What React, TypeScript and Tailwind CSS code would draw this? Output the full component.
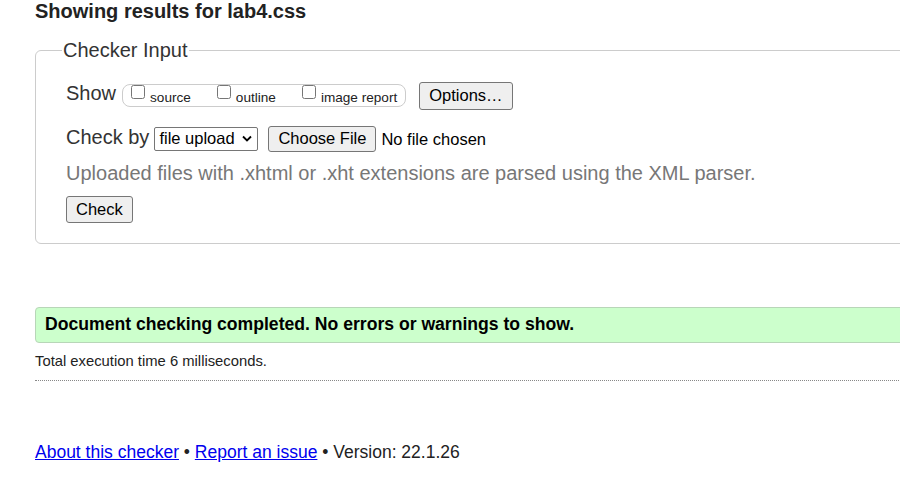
import React from 'react';

const Checkbox = ({ label }: { label: string }) => (
  <label className="flex items-start">
    <input type="checkbox" className="w-[14px] h-[14px] m-0" />
    <span className="ml-[5px] mt-[5px] text-[13.6px] leading-[15px] text-[#222]">{label}</span>
  </label>
);

const GrayButton = ({ children, className = '' }: { children: React.ReactNode; className?: string }) => (
  <button
    className={`bg-[#efefef] border border-[#767676] rounded-[3px] text-[16.5px] text-black leading-none flex items-center ${className}`}
  >
    {children}
  </button>
);

export default function App() {
  return (
    <div className="w-[900px] h-[502px] overflow-hidden bg-white pl-[35px] font-['Liberation_Sans',Arial,sans-serif] text-[#222]">
      <h2 className="text-[20px] font-bold leading-[23px] text-[#222]">Showing results for lab4.css</h2>

      {/* Checker Input */}
      <fieldset className="mt-[15.5px] w-[900px] border border-[#cccccc] rounded-[6px] pl-[30px] pt-[20px] pb-[20px]">
        <legend className="-ml-[4px] px-[1px] text-[20px] leading-[23px] text-[#333]">Checker Input</legend>

        <div className="flex items-start h-[28px]">
          <span className="text-[20px] leading-[23px] text-[#333]">Show</span>
          <div className="ml-[6px] mt-[2px] h-[23px] flex items-start gap-[26px] border border-[#cccccc] rounded-[8px] pl-[8px] pr-[8px]">
            <Checkbox label="source" />
            <Checkbox label="outline" />
            <Checkbox label="image report" />
          </div>
          <GrayButton className="ml-[13px] h-[28px] px-[9px]">Options…</GrayButton>
        </div>

        <div className="flex items-start mt-[16px]">
          <span className="text-[20px] leading-[23px] text-[#333]">Check by</span>
          <div className="ml-[5px] mt-[1px] h-[24px] w-[104px] flex items-center justify-between border border-[#767676] rounded-[2px] bg-white pl-[4px] pr-[5px] text-[16.5px] text-black">
            <span>file upload</span>
            <svg width="10" height="7" viewBox="0 0 10 7" fill="none">
              <path d="M1 1.5 L5 5.5 L9 1.5" stroke="#000" strokeWidth="1.8" />
            </svg>
          </div>
          <GrayButton className="ml-[10px] h-[26px] px-[9px]">Choose File</GrayButton>
          <span className="ml-[5px] text-[16.5px] leading-[26px] text-black">No file chosen</span>
        </div>

        <p className="mt-[10.5px] text-[20px] leading-[23px] text-[#777]">
          Uploaded files with .xhtml or .xht extensions are parsed using the XML parser.
        </p>

        <GrayButton className="mt-[10.5px] h-[27px] px-[9px]">Check</GrayButton>
      </fieldset>

      {/* Result */}
      <div className="mt-[63px] w-[900px] h-[36px] flex items-center bg-[#ccffcc] border border-[#b8d6b8] rounded-[4px] pl-[9px]">
        <span className="text-[17.6px] font-bold text-black">Document checking completed. No errors or warnings to show.</span>
      </div>

      <p className="mt-[10.5px] text-[14.8px] leading-[17px] text-[#222]">Total execution time 6 milliseconds.</p>

      <div className="mt-[9.5px] w-[900px] border-t border-dotted border-[#888]" />

      <p className="mt-[61px] text-[17.5px] leading-[20px] text-[#222]">
        <a href="#" className="text-[#0000ee] underline">About this checker</a>
        {' • '}
        <a href="#" className="text-[#0000ee] underline">Report an issue</a>
        {' • Version: 22.1.26'}
      </p>
    </div>
  );
}
